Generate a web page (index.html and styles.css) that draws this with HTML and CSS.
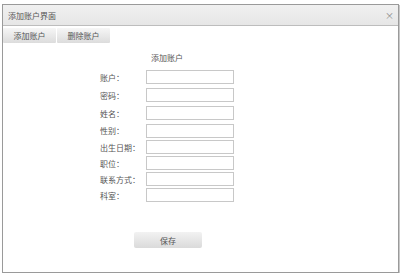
FILE: index.html
```html
<!DOCTYPE html>
<html lang="zh">
<head>
    <meta charset="utf-8">
    <title>添加账户界面</title>
    <link rel="stylesheet" href="styles.css">
</head>
<body>
    <div class="window">
        <div class="title-bar">
            <span class="title">添加账户界面</span>
            <span class="close">×</span>
        </div>
        <div class="toolbar">
            <button type="button" class="tool-btn">添加账户</button>
            <button type="button" class="tool-btn">删除账户</button>
        </div>
        <div class="account-form">
            <div class="form-title">添加账户</div>
            <div class="row tall"><label>账户：</label><input type="text"></div>
            <div class="row tall"><label>密码：</label><input type="password"></div>
            <div class="row tall"><label>姓名：</label><input type="text"></div>
            <div class="row mid"><label>性别：</label><input type="text"></div>
            <div class="row"><label>出生日期：</label><input type="text"></div>
            <div class="row"><label>职位：</label><input type="text"></div>
            <div class="row"><label>联系方式：</label><input type="text"></div>
            <div class="row"><label>科室：</label><input type="text"></div>
            <button type="button" class="save-btn">保存</button>
        </div>
    </div>
</body>
</html>
```

FILE: styles.css
```css
body {
    margin: 0;
    background-color: white;
    font-family: "Noto Sans CJK SC", "DejaVu Sans", sans-serif;
    font-size: 8px;
    color: #555;
}
.window {
    margin: 4px 0 0 2px;
    width: 395px;
    height: 267px;
    border: 1px solid #9a9a9a;
    box-shadow: 1px 1px 0 #c8c8c8;
    background-color: white;
}
/* Title bar */
.title-bar {
    height: 20px;
    display: flex;
    align-items: center;
    justify-content: space-between;
    padding: 0 4px 0 5px;
    background: linear-gradient(#f0f0f0, #e6e6e6);
    border-bottom: 1px solid #bdbdbd;
}
.close {
    color: #888;
    font-size: 9px;
}
/* Toolbar buttons */
.toolbar {
    display: flex;
    gap: 1px;
    padding: 2px 0 0 0;
}
.tool-btn {
    width: 53px;
    height: 15px;
    padding: 0;
    border: none;
    border-radius: 1px;
    background: linear-gradient(#f6f6f6, #dcdcdc);
    font-family: inherit;
    font-size: 8px;
    color: #555;
}
/* Form */
.account-form {
    margin-left: 97px;
    width: 134px;
}
.form-title {
    margin-top: 9px;
    line-height: 12px;
    margin-bottom: 4px;
    text-align: center;
}
.row {
    display: flex;
    align-items: center;
    height: 16px;
}
.row.tall {
    height: 18px;
}
.row.mid {
    height: 17px;
}
.row label {
    width: 46px;
}
.row input {
    box-sizing: border-box;
    width: 88px;
    height: 14px;
    margin: 0;
    padding: 0 2px;
    border: 1px solid #c8c8c8;
    font-size: 8px;
}
.save-btn {
    margin: 29px 0 0 34px;
    width: 68px;
    height: 16px;
    padding: 0;
    border: none;
    border-radius: 2px;
    background: linear-gradient(#f2f2f2, #dadada);
    font-family: inherit;
    font-size: 8px;
    color: #555;
}
```
